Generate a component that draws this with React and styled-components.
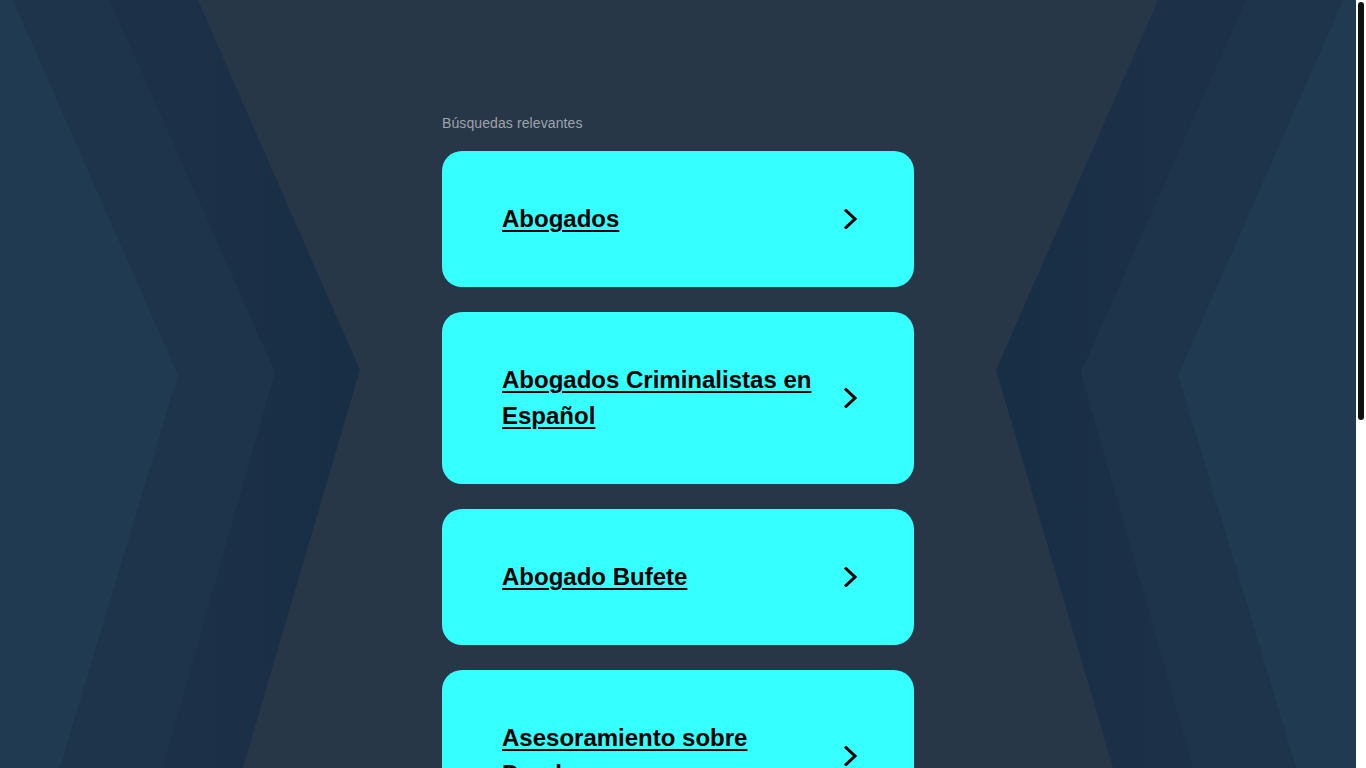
import React from "react";
import styled, { createGlobalStyle } from "styled-components";

const GlobalStyle = createGlobalStyle`
  html, body {
    margin: 0;
    padding: 0;
    height: 100%;
    overflow: hidden;
    background: #283849;
    font-family: "Liberation Sans", Arial, sans-serif;
  }
`;

const Frame = styled.div`
  display: flex;
  height: 100vh;
  width: 100%;
`;

const Viewport = styled.div`
  position: relative;
  flex: 1;
  min-width: 0;
  overflow: hidden;
`;

const Backdrop = styled.svg`
  position: absolute;
  top: 0;
  left: 0;
  width: 100%;
  height: 100%;
  display: block;
`;

const Scroller = styled.div`
  position: relative;
  height: 100%;
  overflow-y: auto;
  scrollbar-width: none;
  &::-webkit-scrollbar {
    display: none;
  }
`;

const Rail = styled.div`
  flex: none;
  width: 10px;
  box-sizing: border-box;
  padding: 2px;
  background: #ffffff;
`;

const Thumb = styled.div`
  height: 418px;
  background: #111111;
  border-radius: 3px;
`;

const Page = styled.main`
  display: flex;
  justify-content: center;
  padding: 115px 0 246px;
`;

const Column = styled.section`
  width: 472px;
  display: flex;
  flex-direction: column;
`;

const Heading = styled.h2`
  margin: 0 0 20px;
  font-size: 14px;
  line-height: 16px;
  font-weight: 400;
  letter-spacing: 0.1px;
  color: #9ea4ab;
`;

const List = styled.div`
  display: flex;
  flex-direction: column;
  gap: 25px;
`;

const Card = styled.a`
  display: flex;
  align-items: center;
  padding: 50px 56px 50px 60px;
  background: #36ffff;
  border-radius: 20px;
  color: #000;
  text-decoration: none;
  cursor: pointer;
`;

const Label = styled.span`
  flex: 1;
  font-size: 24px;
  line-height: 36px;
  font-weight: 700;
  text-decoration: underline;
  text-decoration-thickness: 2px;
  text-underline-offset: 3px;
`;

const Arrow = styled.svg`
  flex: none;
  width: 14px;
  height: 20px;
  margin-left: 20px;
`;

const items = [
  "Abogados",
  "Abogados Criminalistas en Español",
  "Abogado Bufete",
  "Asesoramiento sobre Deudas",
  "Abogados de Accidentes",
  "Abogados de Inmigración",
];

const W = 1356;
const m = (pts) => pts.map(([x, y]) => `${W - x},${y}`).join(" ");
const p = (pts) => pts.map(([x, y]) => `${x},${y}`).join(" ");

const band1 = [[0, 0], [198, 0], [360, 370], [243, 768], [0, 768]];
const band2 = [[0, 0], [110, 0], [275, 372], [163, 768], [0, 768]];
const band3 = [[0, 0], [13, 0], [178, 375], [60, 768], [0, 768]];

function Background() {
  return (
    <Backdrop viewBox="0 0 1356 768" preserveAspectRatio="none" aria-hidden="true">
      <defs>
        <linearGradient id="g1l" x1="0" y1="0" x2="1" y2="0">
          <stop offset="0.5" stopColor="#1c3148" />
          <stop offset="1" stopColor="#182e44" />
        </linearGradient>
        <linearGradient id="g1r" x1="1" y1="0" x2="0" y2="0">
          <stop offset="0.5" stopColor="#1c3148" />
          <stop offset="1" stopColor="#182e44" />
        </linearGradient>
      </defs>
      <rect width="1356" height="768" fill="#273748" />
      <polygon points={p(band1)} fill="url(#g1l)" />
      <polygon points={p(band2)} fill="#1e344b" />
      <polygon points={p(band3)} fill="#203a51" />
      <polygon points={m(band1)} fill="url(#g1r)" />
      <polygon points={m(band2)} fill="#1e344b" />
      <polygon points={m(band3)} fill="#203a51" />
    </Backdrop>
  );
}

export default function App() {
  return (
    <>
      <GlobalStyle />
      <Frame>
        <Viewport>
          <Background />
          <Scroller>
            <Page>
              <Column>
                <Heading>Búsquedas relevantes</Heading>
                <List>
                  {items.map((t) => (
                    <Card key={t} href="#">
                      <Label>{t}</Label>
                      <Arrow viewBox="0 0 14 20">
                        <polyline
                          points="2,1.5 11,10 2,18.5"
                          fill="none"
                          stroke="#000"
                          strokeWidth="3"
                          strokeLinecap="square"
                        />
                      </Arrow>
                    </Card>
                  ))}
                </List>
              </Column>
            </Page>
          </Scroller>
        </Viewport>
        <Rail>
          <Thumb />
        </Rail>
      </Frame>
    </>
  );
}
